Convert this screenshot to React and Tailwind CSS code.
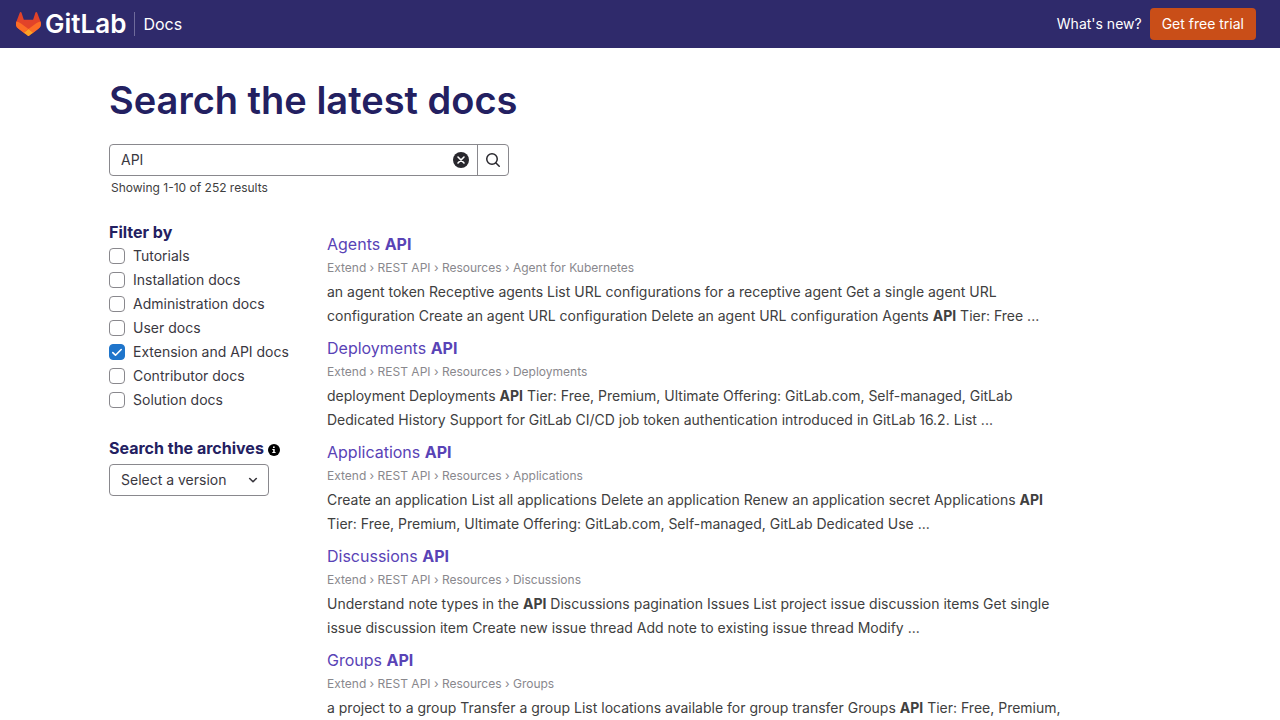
import React, { useState } from "react";

const FILTERS = [
  "Tutorials",
  "Installation docs",
  "Administration docs",
  "User docs",
  "Extension and API docs",
  "Contributor docs",
  "Solution docs",
];

const RESULTS = [
  {
    title: "Agents",
    page: "Agent for Kubernetes",
    before:
      "an agent token Receptive agents List URL configurations for a receptive agent Get a single agent URL configuration Create an agent URL configuration Delete an agent URL configuration Agents ",
    after: " Tier: Free ...",
  },
  {
    title: "Deployments",
    page: "Deployments",
    before: "deployment Deployments ",
    after:
      " Tier: Free, Premium, Ultimate Offering: GitLab.com, Self-managed, GitLab Dedicated History Support for GitLab CI/CD job token authentication introduced in GitLab 16.2. List ...",
  },
  {
    title: "Applications",
    page: "Applications",
    before:
      "Create an application List all applications Delete an application Renew an application secret Applications ",
    after:
      " Tier: Free, Premium, Ultimate Offering: GitLab.com, Self-managed, GitLab Dedicated Use ...",
  },
  {
    title: "Discussions",
    page: "Discussions",
    before: "Understand note types in the ",
    after:
      " Discussions pagination Issues List project issue discussion items Get single issue discussion item Create new issue thread Add note to existing issue thread Modify ...",
  },
  {
    title: "Groups",
    page: "Groups",
    before:
      "a project to a group Transfer a group List locations available for group transfer Groups ",
    after: " Tier: Free, Premium,",
  },
];

function Tanuki() {
  return (
    <svg viewBox="0 0 25 24" className="h-6 w-[25px]" aria-hidden="true">
      <path fill="#E24329" d="m24.507 9.5-.034-.09L21.082.562a.896.896 0 0 0-1.694.091l-2.29 7.01H7.825L5.535.653a.898.898 0 0 0-1.694-.09L.451 9.411.416 9.5a6.297 6.297 0 0 0 2.09 7.278l.012.01.03.022 5.16 3.867 2.56 1.935 1.554 1.176a1.051 1.051 0 0 0 1.268 0l1.555-1.176 2.56-1.935 5.197-3.89.014-.01A6.297 6.297 0 0 0 24.507 9.5Z" />
      <path fill="#FC6D26" d="m24.507 9.5-.034-.09a11.44 11.44 0 0 0-4.56 2.051l-7.447 5.632 4.742 3.584 5.197-3.89.014-.01A6.297 6.297 0 0 0 24.507 9.5Z" />
      <path fill="#FCA326" d="m7.707 20.677 2.56 1.935 1.555 1.176a1.051 1.051 0 0 0 1.268 0l1.555-1.176 2.56-1.935-4.743-3.584-4.755 3.584Z" />
      <path fill="#FC6D26" d="M5.01 11.461a11.43 11.43 0 0 0-4.56-2.05L.416 9.5a6.297 6.297 0 0 0 2.09 7.278l.012.01.03.022 5.16 3.867 4.745-3.584-7.444-5.632Z" />
    </svg>
  );
}

function Header() {
  return (
    <header className="flex h-12 items-center justify-between bg-[#2f2a6b] pl-4 pr-6 text-white">
      <div className="flex items-center">
        <a href="#home" className="flex items-center gap-1">
          <Tanuki />
          <span className="text-[26px] leading-6 font-semibold">GitLab</span>
        </a>
        <a href="#docs" className="ml-2 border-l border-[#6f6b9b] pl-2 text-base leading-6">
          Docs
        </a>
      </div>
      <nav className="flex items-center gap-2 text-sm">
        <a href="#new">What's new?</a>
        <a href="#trial" className="flex h-8 items-center rounded bg-[#c94e18] px-3">
          Get free trial
        </a>
      </nav>
    </header>
  );
}

function SearchForm() {
  const [query, setQuery] = useState("API");
  return (
    <form className="w-full max-w-[400px]" role="search" onSubmit={(e) => e.preventDefault()}>
      <div className="flex h-8 overflow-hidden rounded border border-[#89888d]">
        <input
          type="text"
          aria-label="Search"
          value={query}
          onChange={(e) => setQuery(e.target.value)}
          className="min-w-0 flex-1 pl-[11px] text-sm text-[#3a383f] outline-none"
        />
        <button type="button" aria-label="Clear" onClick={() => setQuery("")} className="grid w-8 place-items-center">
          <svg viewBox="0 0 16 16" className="size-4" aria-hidden="true">
            <circle cx="8" cy="8" r="8" fill="#28272d" />
            <path d="m5 5 6 6m0-6-6 6" stroke="#fff" strokeWidth="1.6" strokeLinecap="round" />
          </svg>
        </button>
        <button type="submit" aria-label="Submit search" className="grid w-[31px] place-items-center border-l border-[#89888d]">
          <svg viewBox="0 0 16 16" className="size-4" fill="none" stroke="#28272d" strokeWidth="1.5" strokeLinecap="round" aria-hidden="true">
            <circle cx="7" cy="7" r="5.25" />
            <path d="m11 11 3.25 3.25" />
          </svg>
        </button>
      </div>
      <p className="pl-0.5 text-xs leading-6 text-[#404040]">Showing 1-10 of 252 results</p>
    </form>
  );
}

function Filter({ label, defaultChecked }) {
  return (
    <label className="flex h-6 items-center gap-2 text-sm">
      <span className="grid size-4 shrink-0">
        <input
          type="checkbox"
          defaultChecked={defaultChecked}
          className="peer col-start-1 row-start-1 size-4 appearance-none rounded border border-[#89888d] bg-white checked:border-[#1f75cb] checked:bg-[#1f75cb]"
        />
        <svg viewBox="0 0 16 16" className="pointer-events-none invisible col-start-1 row-start-1 size-4 peer-checked:visible" fill="none" stroke="#fff" strokeWidth="1.6" strokeLinecap="round" strokeLinejoin="round" aria-hidden="true">
          <path d="m3.8 8.6 2.7 2.6 5.7-5.7" />
        </svg>
      </span>
      {label}
    </label>
  );
}

function Sidebar() {
  return (
    <aside className="w-[218px] shrink-0 text-[#3a383f]">
      <h2 className="text-base leading-6 font-bold text-[#232061]">Filter by</h2>
      <div className="flex flex-col">
        {FILTERS.map((f) => (
          <Filter key={f} label={f} defaultChecked={f === "Extension and API docs"} />
        ))}
      </div>
      <h2 className="mt-6 flex items-center gap-1 text-base leading-6 font-bold text-[#232061]">
        <label htmlFor="version">Search the archives</label>
        <svg viewBox="0 0 12 12" className="mt-1 size-3" aria-hidden="true">
          <circle cx="6" cy="6" r="6" fill="#000" />
          <path fill="#fff" d="M5 2.4h1.7V4H5zM4.3 4.9h2.4v3.2h.9v1H4.3v-1h.9V5.9h-.9z" />
        </svg>
      </h2>
      <div className="mt-1 grid w-40 items-center">
        <select id="version" className="col-start-1 row-start-1 h-8 w-full appearance-none rounded border border-[#89888d] bg-white pl-[11px] text-sm">
          <option>Select a version</option>
        </select>
        <svg viewBox="0 0 16 16" className="pointer-events-none col-start-1 row-start-1 mr-2 size-4 justify-self-end" fill="none" stroke="#3a383f" strokeWidth="1.6" strokeLinecap="round" strokeLinejoin="round" aria-hidden="true">
          <path d="M4.7 6.5 8 9.7l3.3-3.2" />
        </svg>
      </div>
    </aside>
  );
}

function Result({ title, page, before, after }) {
  return (
    <li className="mb-2">
      <a href={"#" + title} className="block text-base leading-6 text-[#5943b6]">
        {title} <b className="font-bold">API</b>
      </a>
      <p className="text-xs leading-6 text-[#89888d]">Extend › REST API › Resources › {page}</p>
      <p className="text-sm leading-6 text-[#404040]">
        {before}
        <b className="font-bold">API</b>
        {after}
      </p>
    </li>
  );
}

export default function App() {
  return (
    <div className="bg-white font-['Inter','Noto_Sans',sans-serif]">
      <Header />
      <main className="mx-auto max-w-[1062px] pt-7">
        <h1 className="mb-5 text-[38px] leading-[48px] font-semibold text-[#232061]">
          Search the latest docs
        </h1>
        <SearchForm />
        <div className="mt-5 flex">
          <Sidebar />
          <ul className="max-w-[745px] min-w-0 flex-1 pt-3 *:last:mb-0">
            {RESULTS.map((r) => (
              <Result key={r.title} {...r} />
            ))}
          </ul>
        </div>
      </main>
    </div>
  );
}
